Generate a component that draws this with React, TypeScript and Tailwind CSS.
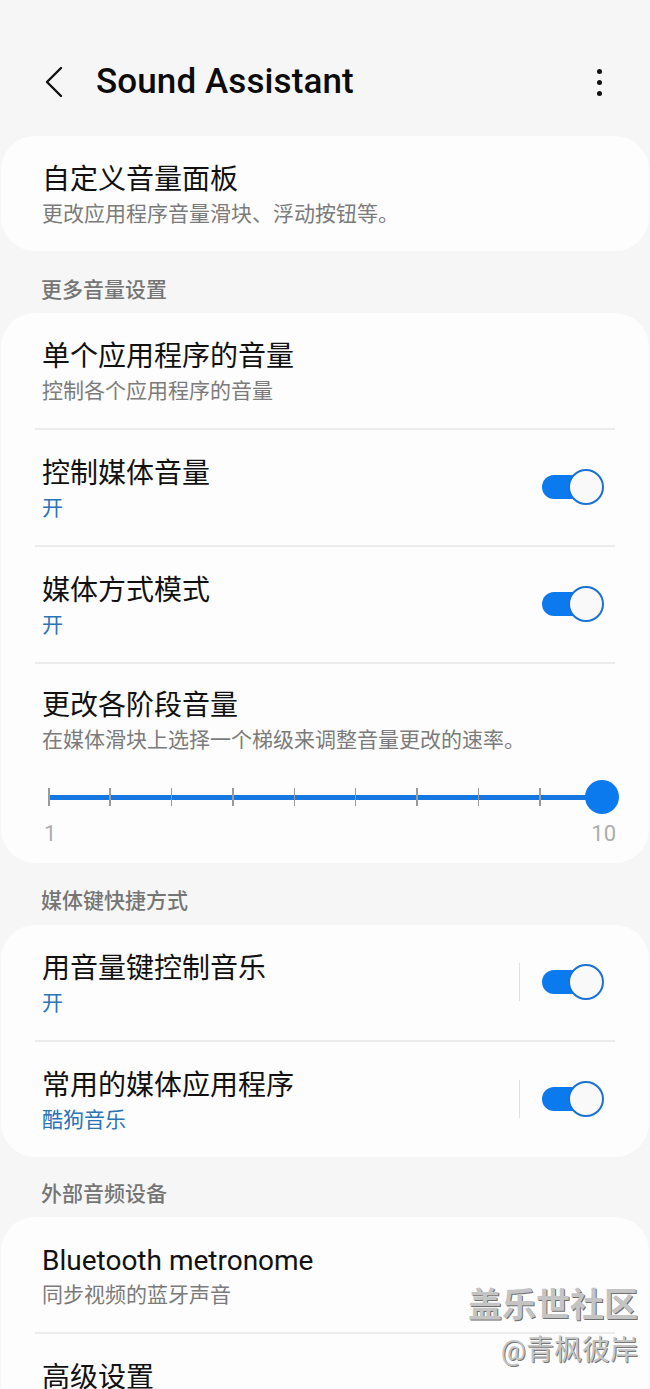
const font = { fontFamily: 'Roboto, "Noto Sans CJK SC", sans-serif' };

const Toggle = () => (
  <div className="relative -mt-[6px] h-[36px] w-[62px] shrink-0">
    <div className="absolute left-0 top-[6px] h-[24px] w-[48px] rounded-full bg-[#0b7aee]" />
    <div className="absolute right-0 top-0 h-[36px] w-[36px] rounded-full border-2 border-[#1a72d6] bg-[#f9f9f9]" />
  </div>
);

const Divider = () => <div className="mx-[34px] h-[2px] bg-[#ececec]" />;

type RowProps = {
  title: string;
  sub?: string;
  blue?: boolean;
  toggle?: boolean;
  sep?: boolean;
};

const Row = ({ title, sub, blue, toggle, sep }: RowProps) => (
  <div className="flex items-center pl-[41px] pr-[45px] pt-[27px] pb-[23px]">
    <div className="flex flex-1 flex-col gap-[3px]">
      <div className="text-[28px] leading-[34px] text-[#111]">{title}</div>
      {sub && (
        <div className={`text-[21px] leading-[28px] ${blue ? 'text-[#2a74b8]' : 'text-[#7b7b7b]'}`}>{sub}</div>
      )}
    </div>
    {sep && <div className="mr-[22px] -mt-[6px] h-[38px] w-[1px] bg-[#e0e0e0]" />}
    {toggle && <Toggle />}
  </div>
);

const Section = ({ label }: { label: string }) => (
  <div className="px-[41px] text-[21px] font-medium leading-[28px] text-[#757575]">{label}</div>
);

const Card = ({ children }: { children: React.ReactNode }) => (
  <div className="mx-[1px] rounded-[34px] bg-[#fdfdfd]">{children}</div>
);

const Slider = () => (
  <div className="px-[47px] pt-[25px] pb-[16px]">
    <div className="-ml-[6px] text-[28px] leading-[34px] text-[#111]">更改各阶段音量</div>
    <div className="mt-[3px] -ml-[6px] text-[21px] leading-[28px] text-[#7b7b7b]">
      在媒体滑块上选择一个梯级来调整音量更改的速率。
    </div>
    <div className="relative mt-[26px] h-[34px]">
      <div className="absolute left-0 right-0 top-[15px] h-[5px] rounded-full bg-[#1677e0]" />
      <div className="absolute inset-x-0 top-[8px] flex justify-between">
        {Array.from({ length: 10 }).map((_, i) => (
          <div key={i} className="h-[18px] w-[1.5px] bg-[#9a9a9a]" />
        ))}
      </div>
      <div className="absolute right-[-17px] top-0 h-[34px] w-[34px] rounded-full bg-[#0b7aee]" />
    </div>
    <div className="mt-[7px] flex justify-between text-[22px] leading-[26px] text-[#adadad]">
      <span className="-ml-[4px]">1</span>
      <span className="-mr-[14px]">10</span>
    </div>
  </div>
);

export default function App() {
  return (
    <div className="relative h-[1389px] w-[650px] overflow-hidden bg-[#f6f6f6]" style={font}>
      <div className="mt-[58px] mb-[30px] flex h-[48px] items-center pl-[44px] pr-[48px]">
        <svg width="20" height="32" viewBox="0 0 20 32" className="shrink-0">
          <polyline points="17,2 3,16 17,30" fill="none" stroke="#111" strokeWidth="2.4" strokeLinecap="round" strokeLinejoin="round" />
        </svg>
        <div className="ml-[32px] flex-1 text-[35px] font-medium tracking-[0.1px] text-[#0c0c0c]">Sound Assistant</div>
        <div className="flex flex-col gap-[6px]">
          <div className="h-[5px] w-[5px] rounded-full bg-[#111]" />
          <div className="h-[5px] w-[5px] rounded-full bg-[#111]" />
          <div className="h-[5px] w-[5px] rounded-full bg-[#111]" />
        </div>
      </div>

      <Card>
        <div className="flex flex-col gap-[3px] pl-[41px] pt-[27px] pb-[23px]">
          <div className="text-[28px] leading-[34px] text-[#111]">自定义音量面板</div>
          <div className="text-[21px] leading-[28px] text-[#7b7b7b]">更改应用程序音量滑块、浮动按钮等。</div>
        </div>
      </Card>

      <div className="mt-[25px] mb-[9px]">
        <Section label="更多音量设置" />
      </div>
      <Card>
        <Row title="单个应用程序的音量" sub="控制各个应用程序的音量" />
        <Divider />
        <Row title="控制媒体音量" sub="开" blue toggle />
        <Divider />
        <Row title="媒体方式模式" sub="开" blue toggle />
        <Divider />
        <Slider />
      </Card>

      <div className="mt-[24px] mb-[10px]">
        <Section label="媒体键快捷方式" />
      </div>
      <Card>
        <Row title="用音量键控制音乐" sub="开" blue toggle sep />
        <Divider />
        <Row title="常用的媒体应用程序" sub="酷狗音乐" blue toggle sep />
      </Card>

      <div className="mt-[23px] mb-[9px]">
        <Section label="外部音频设备" />
      </div>
      <Card>
        <Row title="Bluetooth metronome" sub="同步视频的蓝牙声音" />
        <Divider />
        <Row title="高级设置" />
      </Card>

      <div className="absolute right-[12px] top-[1284px] flex flex-col items-end">
        <div className="text-[34px] font-bold leading-[42px] text-[#c4c4c4] [text-shadow:1px_1px_0_#6f6f6f]">盖乐世社区</div>
        <div className="mt-[8px] text-[28px] leading-[34px] text-[#c4c4c4] [text-shadow:1px_1px_0_#777]">@青枫彼岸</div>
      </div>
    </div>
  );
}
